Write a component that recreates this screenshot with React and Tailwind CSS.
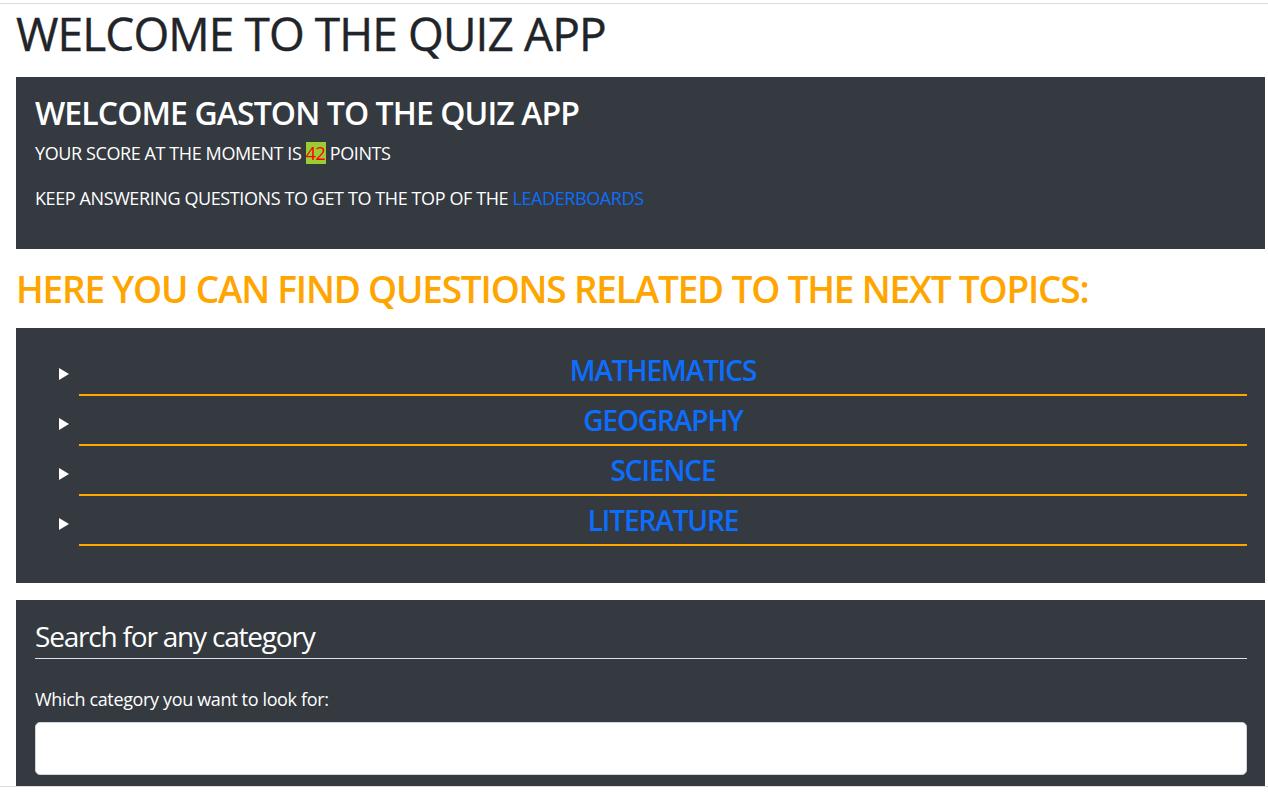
const topics = ["MATHEMATICS", "GEOGRAPHY", "SCIENCE", "LITERATURE"];

const TopicRow = ({ name }) => (
  <div className="flex">
    <div className="w-5 shrink-0 pt-[22px]">
      <svg width="10" height="12" viewBox="0 0 10 12">
        <polygon points="0,0 10,6 0,12" fill="#ffffff" />
      </svg>
    </div>
    <h4 className="flex-1 h-[50px] border-b-2 border-[#ffa500] text-center text-[28px] leading-[48px] font-semibold tracking-[-1.1px] text-[#0d6efd]">
      {name}
    </h4>
  </div>
);

export default function App() {
  return (
    <div
      className="h-[793px] flex flex-col overflow-hidden bg-white"
      style={{ fontFamily: '"Open Sans", "Noto Sans", sans-serif' }}
    >
      <div className="h-[3px] shrink-0" />
      <div className="flex-1 overflow-hidden border-t border-[#dcdcdc] pl-4 pr-[3px]">
        <h1 className="mt-[2px] text-[46px] leading-[1.2] font-normal tracking-[-0.9px] text-[#212529] [-webkit-text-stroke:0.4px_#212529]">
          WELCOME TO THE QUIZ APP
        </h1>

        <section className="mt-[16px] bg-[#343a40] pt-[17px] pb-[37px] px-[19px] text-white">
          <h3 className="mb-[7px] text-[32px] leading-[1.2] font-semibold tracking-[-0.9px]">
            WELCOME GASTON TO THE QUIZ APP
          </h3>
          <p className="text-[18px] leading-[1.5] tracking-[-0.4px]">
            YOUR SCORE AT THE MOMENT IS{" "}
            <span className="inline-block h-[22px] leading-[22px] bg-[#9acd32] text-[#ff0000]">42</span>{" "}
            POINTS
          </p>
          <p className="mt-[18px] text-[18px] leading-[1.5] tracking-[-0.4px]">
            KEEP ANSWERING QUESTIONS TO GET TO THE TOP OF THE{" "}
            <a href="#" className="text-[#0d6efd]">LEADERBOARDS</a>
          </p>
        </section>

        <h2 className="mt-[18px] text-[37px] leading-[1.2] font-semibold tracking-[-1.2px] text-[#ffa500]">
          HERE YOU CAN FIND QUESTIONS RELATED TO THE NEXT TOPICS:
        </h2>

        <section className="mt-[17px] bg-[#343a40] pt-[18px] pb-[37px] pl-[43px] pr-[18px]">
          {topics.map((t) => (
            <TopicRow key={t} name={t} />
          ))}
        </section>

        <section className="mt-[17px] bg-[#343a40] pt-[20px] px-[19px] pr-[18px] pb-10 text-white">
          <h4 className="pb-[4px] border-b border-[#dee2e6] text-[28px] leading-[1.2] font-normal tracking-[-1.2px]">
            Search for any category
          </h4>
          <label className="block mt-[27px] mb-[9px] text-[18px] leading-[1.5] tracking-[-0.35px]">
            Which category you want to look for:
          </label>
          <input
            type="text"
            className="block w-full h-[53px] rounded-[5px] border border-[#ced4da] bg-white px-4 text-[20px] text-[#212529] outline-none"
          />
        </section>
      </div>
      <div className="h-[7px] shrink-0 border-t border-[#dcdcdc]" />
    </div>
  );
}
